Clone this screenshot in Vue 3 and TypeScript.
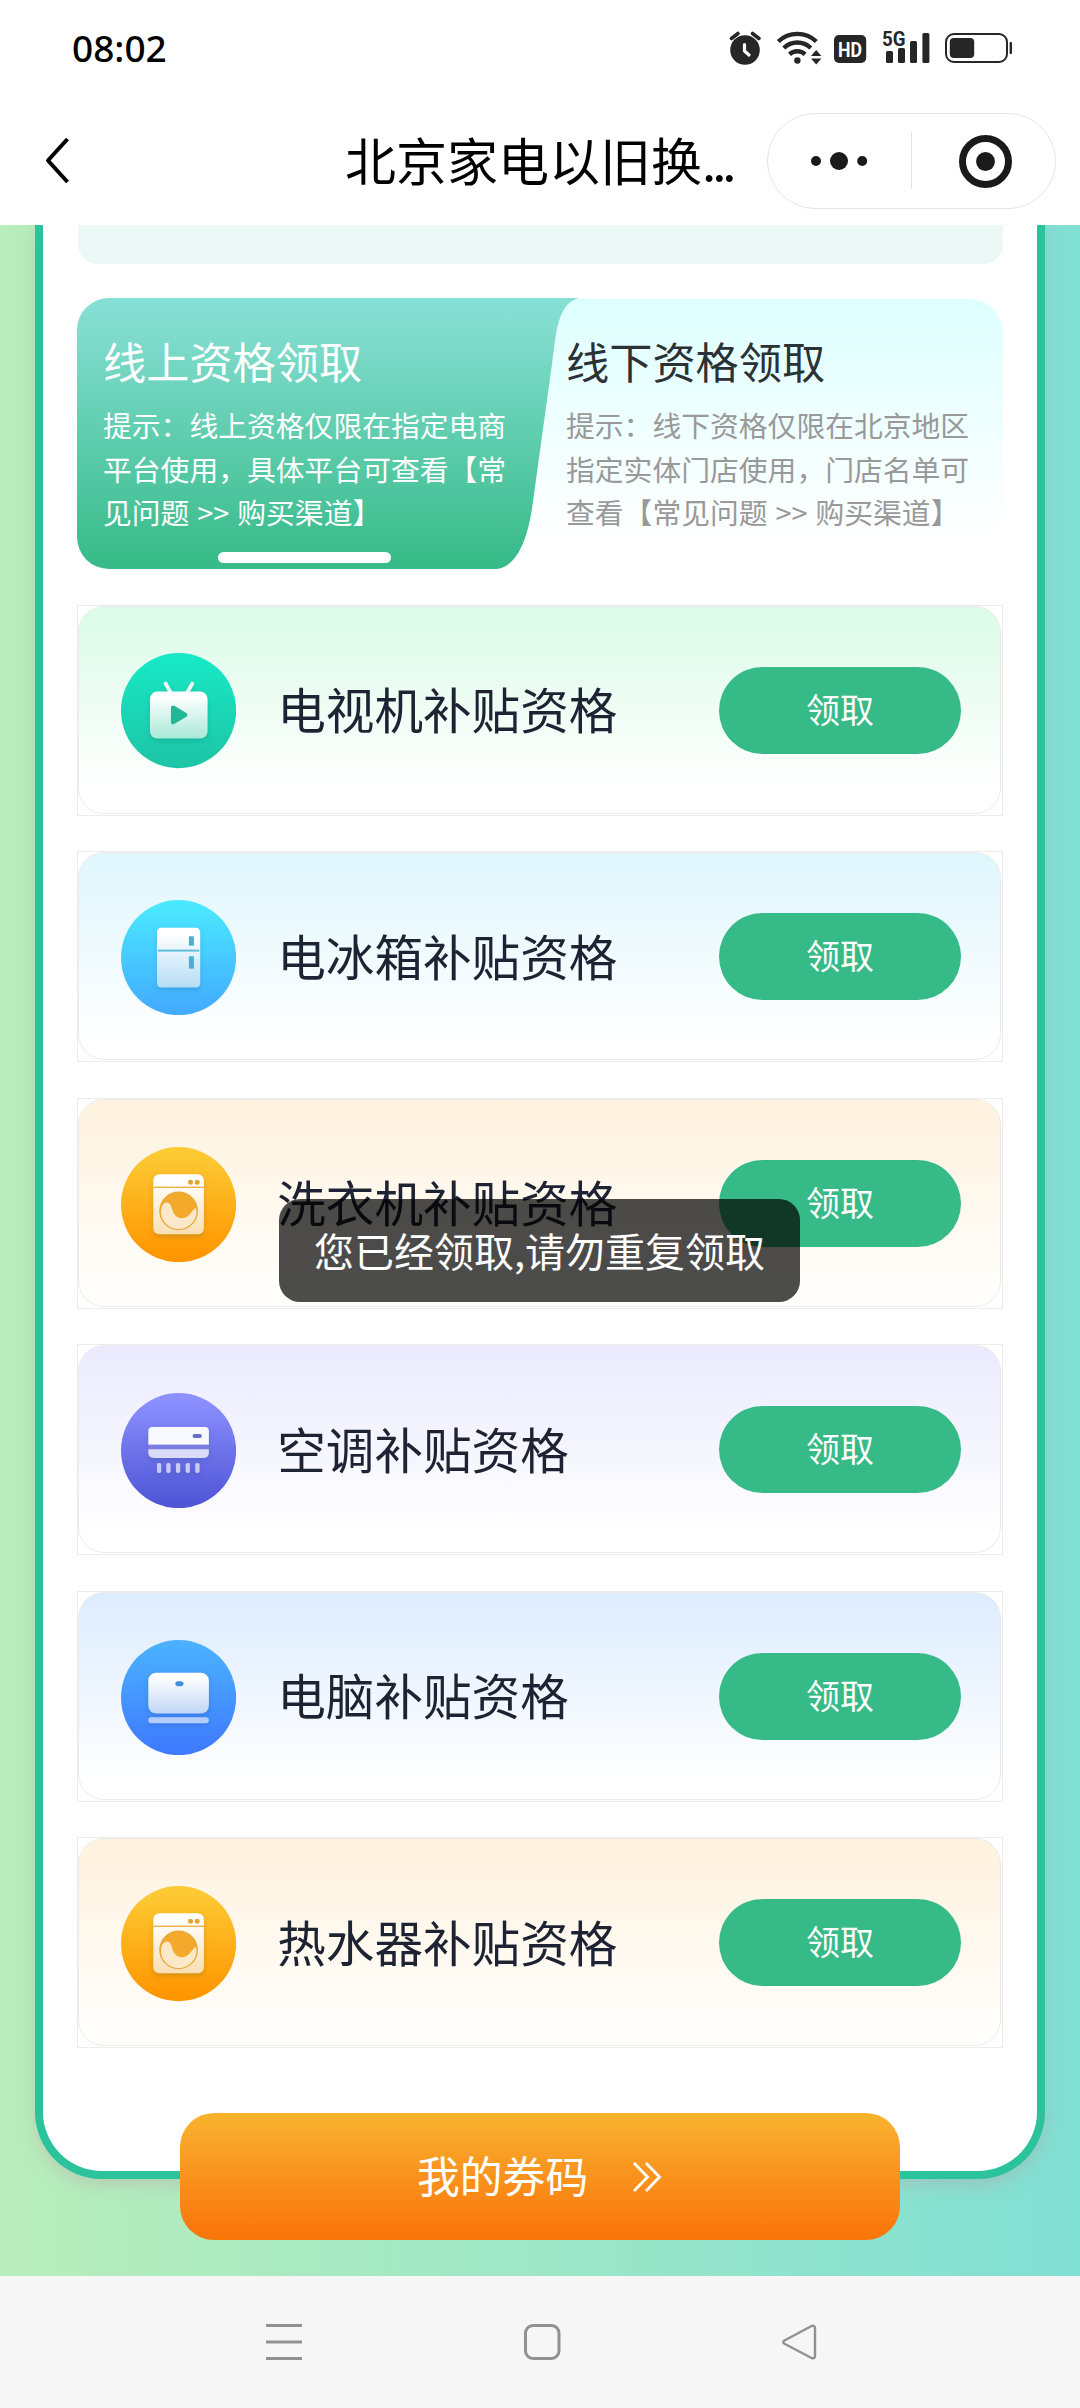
<script setup lang="ts">
type IconName = 'tv' | 'fridge' | 'washer' | 'ac' | 'laptop'

interface Item {
  id: number
  name: string
  icon: IconName
  tone: string
}

const items: Item[] = [
  { id: 1, name: '电视机补贴资格', icon: 'tv', tone: 'green' },
  { id: 2, name: '电冰箱补贴资格', icon: 'fridge', tone: 'cyan' },
  { id: 3, name: '洗衣机补贴资格', icon: 'washer', tone: 'orange' },
  { id: 4, name: '空调补贴资格', icon: 'ac', tone: 'violet' },
  { id: 5, name: '电脑补贴资格', icon: 'laptop', tone: 'blue' },
  { id: 6, name: '热水器补贴资格', icon: 'washer', tone: 'orange' },
]

const discs: Record<IconName, [string, string]> = {
  tv: ['#18e8c5', '#1cc6a6'],
  fridge: ['#4ae8ff', '#43acff'],
  washer: ['#fdca34', '#ff9600'],
  ac: ['#8d90ff', '#5056d6'],
  laptop: ['#4bb0ff', '#3f7bff'],
}

const bodies: Record<IconName, [string, string]> = {
  tv: ['#ffffff', '#a9e8d7'],
  fridge: ['#ffffff', '#b5dcf6'],
  washer: ['#ffffff', '#f8dfb4'],
  ac: ['#ffffff', '#d0d2f4'],
  laptop: ['#ffffff', '#c2d7f6'],
}

const onlineHint: string[] = [
  '提示：线上资格仅限在指定电商',
  '平台使用，具体平台可查看【常',
  '见问题 >> 购买渠道】',
]
const offlineHint: string[] = [
  '提示：线下资格仅限在北京地区',
  '指定实体门店使用，门店名单可',
  '查看【常见问题 >> 购买渠道】',
]
</script>

<template>
  <div class="phone">
    <header class="status">
      <span class="clock">08:02</span>
      <svg class="status-icons" width="290" height="44" viewBox="726 26 290 44">
        <g fill="#262626">
          <circle cx="745" cy="50" r="14.8" />
          <path d="M731.5 38.5l6.5-5M752.5 33.5l6.500 5" stroke="#262626" stroke-width="3.6" stroke-linecap="round" />
          <path d="M744.500 44.500v6.500l4.500 4" fill="none" stroke="#fff" stroke-width="3.200" stroke-linecap="round" />
          <g fill="none" stroke="#262626" stroke-width="4.4">
            <path d="M778.300 41.500a27.500 27.500 0 0 1 38 0" />
            <path d="M783.800 48a19.500 19.500 0 0 1 27 0" />
            <path d="M789.500 54.300a11.500 11.500 0 0 1 15.600 0" />
          </g>
          <circle cx="797.400" cy="60.500" r="3.200" />
          <path d="M811 56l5.200-6 5.200 6zM811 58.500l5.200 6 5.200-6z" />
          <rect x="834" y="35" width="32.200" height="28" rx="5" />
          <rect x="886" y="51" width="7" height="12" rx="1.500" />
          <rect x="898" y="48" width="7" height="15" rx="1.500" />
          <rect x="910" y="41" width="7" height="22" rx="1.500" />
          <rect x="922.400" y="33" width="7" height="30" rx="1.500" />
          <rect x="949.800" y="38" width="24.400" height="20" rx="4" />
          <rect x="1009.600" y="42" width="2.400" height="12" rx="1" />
        </g>
        <rect x="946" y="34" width="61" height="28" rx="8" fill="none" stroke="#262626" stroke-width="2" />
        <text x="850.100" y="57" class="hd" text-anchor="middle" textLength="24" lengthAdjust="spacingAndGlyphs">HD</text>
        <text x="893.800" y="46" class="fiveg" text-anchor="middle" textLength="23.500" lengthAdjust="spacingAndGlyphs">5G</text>
      </svg>
    </header>

    <nav class="titlebar">
      <svg class="back" width="30" height="52" viewBox="0 0 30 52">
        <path d="M24.500 4L5 25.500 24.500 47" fill="none" stroke="#000" stroke-width="4" stroke-linejoin="round" />
      </svg>
      <h1 class="title">北京家电以旧换<span class="dots">...</span></h1>
      <div class="capsule">
        <svg width="143" height="94" viewBox="0 0 143 94" fill="#1a1a1a">
          <circle cx="48" cy="47" r="5" />
          <circle cx="71" cy="47" r="9" />
          <circle cx="94.200" cy="47" r="5" />
        </svg>
        <i class="split"></i>
        <svg width="143" height="94" viewBox="0 0 143 94">
          <circle cx="73.500" cy="47.500" r="23" fill="none" stroke="#1a1a1a" stroke-width="7" />
          <circle cx="73.500" cy="47.500" r="9.400" fill="#1a1a1a" />
        </svg>
      </div>
    </nav>

    <main class="page">
      <section class="sheet">
        <div class="notice"></div>

        <div class="tabs">
          <svg class="tabs-bg" width="926" height="271" viewBox="0 0 926 271">
            <defs>
              <linearGradient id="tab-on" x1="0" y1="0" x2="0" y2="1">
                <stop offset="0" stop-color="#86dfd4" />
                <stop offset="0.12" stop-color="#80dccd" />
                <stop offset="1" stop-color="#36ba87" />
              </linearGradient>
              <linearGradient id="tab-off" x1="0" y1="0" x2="0" y2="1">
                <stop offset="0" stop-color="#deffff" />
                <stop offset="0.9" stop-color="#ffffff" />
              </linearGradient>
            </defs>
            <path d="M440 1H892a34 34 0 0 1 34 34V271H400z" fill="url(#tab-off)" />
            <path d="M32 0H503C490 2 483 14 479 36Q477 48 475 66L457 196C452 240 441 268 420 271H32a32 32 0 0 1-32-32V32A32 32 0 0 1 32 0z" fill="url(#tab-on)" />
          </svg>
          <div class="tab online">
            <h2>线上资格领取</h2>
            <p v-for="line in onlineHint" :key="line">{{ line }}</p>
            <i class="indicator"></i>
          </div>
          <div class="tab offline">
            <h2>线下资格领取</h2>
            <p v-for="line in offlineHint" :key="line">{{ line }}</p>
          </div>
        </div>

        <ul class="list">
          <li v-for="item in items" :key="item.id" class="item">
            <div class="item-inner" :class="item.tone">
              <svg class="icon" viewBox="0 0 346 346">
                <defs>
                  <linearGradient :id="`disc-${item.id}`" x1="0" y1="0" x2="0" y2="1">
                    <stop offset="0.05" :stop-color="discs[item.icon][0]" />
                    <stop offset="0.95" :stop-color="discs[item.icon][1]" />
                  </linearGradient>
                  <linearGradient :id="`body-${item.id}`" x1="0" y1="0" x2="0" y2="1">
                    <stop offset="0.1" :stop-color="bodies[item.icon][0]" />
                    <stop offset="1" :stop-color="bodies[item.icon][1]" />
                  </linearGradient>
                </defs>
                <circle cx="173" cy="173" r="173" :fill="`url(#disc-${item.id})`" />

                <g v-if="item.icon === 'tv'" class="raised">
                  <path d="M134 92l16 28M214 92l-16 28" stroke="#e6fbf6" stroke-width="12" stroke-linecap="round" />
                  <rect x="87" y="116" width="173" height="141" rx="22" :fill="`url(#body-${item.id})`" />
                  <path d="M154 165q0-5 5-2l34 20q5 3 0 6l-34 20q-5 3-5-2z" fill="#22b795" stroke="#22b795" stroke-width="8" stroke-linejoin="round" />
                </g>

                <g v-else-if="item.icon === 'fridge'" class="raised">
                  <rect x="108" y="83" width="130" height="180" rx="13" :fill="`url(#body-${item.id})`" />
                  <rect x="111" y="149" width="124" height="6" fill="#5fbdd8" />
                  <rect x="204" y="109" width="15" height="28" fill="#46b2d2" />
                  <rect x="204" y="169" width="15" height="37" fill="#46b2d2" />
                </g>

                <g v-else-if="item.icon === 'washer'" class="raised">
                  <rect x="97" y="82" width="152" height="180" rx="18" :fill="`url(#body-${item.id})`" />
                  <rect x="97" y="119" width="152" height="4" fill="#edb03c" />
                  <circle cx="209" cy="106" r="7.500" fill="#e3a52f" />
                  <circle cx="229" cy="106" r="7.500" fill="#e3a52f" />
                  <circle cx="173" cy="192" r="57" fill="#f2a92c" />
                  <path d="M124 176C132 164 144 162 151 178C156 196 162 214 184 214C206 214 212 190 226 182A54 54 0 1 1 124 176z" fill="#fbe8c8" />
                  <circle cx="173" cy="192" r="56" fill="none" stroke="#e9a93a" stroke-width="4" />
                </g>

                <g v-else-if="item.icon === 'ac'" class="raised">
                  <path d="M82 156v-42q0-12 12-12h158q12 0 12 12v42z" fill="#f8f8ff" />
                  <rect x="82" y="155" width="182" height="15" fill="#7b7ee0" />
                  <path d="M82 169h182v10q0 16-16 16H98q-16 0-16-16z" fill="#dadbf7" />
                  <rect x="215" y="123" width="28" height="12" rx="6" fill="#6a6dc4" />
                  <rect v-for="x in [108, 136, 165, 194, 223]" :key="x" :x="x" y="210" width="13" height="30" rx="5" fill="#c8cbf6" />
                </g>

                <g v-else class="raised">
                  <rect x="82" y="98" width="182" height="123" rx="24" :fill="`url(#body-${item.id})`" />
                  <rect x="163" y="124" width="25" height="15" rx="7.500" fill="#4590dd" />
                  <rect x="82" y="232" width="182" height="18" rx="9" fill="#b3cdfb" />
                </g>
              </svg>
              <span class="name">{{ item.name }}</span>
              <button class="claim" type="button">领取</button>
            </div>
          </li>
        </ul>
      </section>

      <button class="codes" type="button">
        <span>我的券码</span>
        <svg width="30" height="32" viewBox="0 0 30 32">
          <path d="M2 2l13.500 14L2 30M14 2l13.500 14L14 30" fill="none" stroke="#fff" stroke-width="2.800" />
        </svg>
      </button>
    </main>

    <footer class="keys">
      <svg width="40" height="40" viewBox="0 0 40 40">
        <path d="M2 3.500h36M2 20h36M2 36.500h36" stroke="#919191" stroke-width="3" />
      </svg>
      <svg width="40" height="40" viewBox="0 0 40 40">
        <rect x="3.500" y="3.500" width="33.500" height="33" rx="7.500" fill="none" stroke="#919191" stroke-width="3" />
      </svg>
      <svg width="40" height="40" viewBox="0 0 40 40">
        <path d="M4.500 18.500L31.500 4Q35 3 35 6.500V33.500Q35 37 31.500 36L4.500 21.800Q2 20.200 4.500 18.500z" fill="none" stroke="#919191" stroke-width="2.400" stroke-linejoin="round" />
      </svg>
    </footer>

    <div class="toast">您已经领取,请勿重复领取</div>
  </div>
</template>

<style>
body {
  margin: 0;
}
</style>

<style scoped>
.phone {
  position: relative;
  display: flex;
  flex-direction: column;
  width: 1080px;
  height: 2408px;
  overflow: hidden;
  background: #fff;
  font-family: 'Noto Sans CJK SC', 'Noto Sans', sans-serif;
}
h1,
h2,
p,
ul {
  margin: 0;
  padding: 0;
  font-weight: 400;
  list-style: none;
}
button {
  border: 0;
  padding: 0;
  font-family: inherit;
  color: #fff;
}
svg {
  display: block;
  flex: none;
}

.status {
  display: flex;
  justify-content: space-between;
  align-items: center;
  box-sizing: border-box;
  height: 96px;
  padding: 0 64px 0 72px;
}
.clock {
  font-family: 'Noto Sans', sans-serif;
  font-size: 37px;
  font-weight: 500;
  line-height: 44px;
  color: #000;
}
.hd {
  font: 700 21px Roboto, sans-serif;
  fill: #fff;
}
.fiveg {
  font: 700 21px Roboto, sans-serif;
  fill: #262626;
}

.titlebar {
  display: flex;
  align-items: center;
  box-sizing: border-box;
  height: 129px;
  padding: 0 24px 0 43px;
}
.title {
  margin-left: 272px;
  width: 422px;
  padding-bottom: 4px;
  font-size: 51px;
  line-height: 70px;
  white-space: nowrap;
  color: #000;
}
.dots {
  letter-spacing: -4px;
}
.capsule {
  display: flex;
  align-items: center;
  width: 287px;
  height: 94px;
  border: 1px solid #e4e4e4;
  border-radius: 48px;
}
.split {
  width: 1px;
  height: 57px;
  background: #e2e2e2;
}

.page {
  display: flex;
  flex-direction: column;
  align-items: center;
  height: 2051px;
  overflow: hidden;
  background: linear-gradient(90deg, #b9eebb 0%, #80dfd3 100%);
}
.sheet {
  box-sizing: border-box;
  width: 1010px;
  height: 1954px;
  flex: none;
  padding: 0 34px;
  border: solid #2bc39b;
  border-width: 0 8px 8px;
  border-radius: 0 0 67px 67px;
  background: #fff;
  box-shadow: 0 6px 18px rgba(190, 150, 160, 0.35);
}
.notice {
  height: 39px;
  margin: 0 0.500px;
  border-radius: 0 0 20px 20px;
  background: #ecf8f5;
}

.tabs {
  position: relative;
  display: flex;
  height: 271px;
  margin-top: 34px;
}
.tabs-bg {
  position: absolute;
  inset: 0;
}
.tab {
  position: relative;
  box-sizing: border-box;
  padding: 30px 0 0 26px;
  white-space: nowrap;
}
.tab h2 {
  margin-bottom: 11px;
  font-size: 43.200px;
  line-height: 64px;
}
.tab p {
  font-size: 28.800px;
  line-height: 43.500px;
  word-spacing: 1.500px;
}
.online {
  width: 463px;
  color: #fff;
}
.offline h2 {
  color: #2c3135;
}
.offline p {
  color: #999;
}
.indicator {
  position: absolute;
  left: 141px;
  bottom: 6px;
  width: 173px;
  height: 11px;
  border-radius: 6px;
  background: #fff;
}

.list {
  display: flex;
  flex-direction: column;
  gap: 35.600px;
  margin-top: 35.500px;
}
.item {
  box-sizing: border-box;
  height: 211px;
  border: 1px solid #ececec;
}
.item-inner {
  display: flex;
  align-items: center;
  box-sizing: border-box;
  height: 208px;
  margin: 0 1px 1px 0;
  padding: 3px 39px 0 42px;
  border: 1px solid #ececec;
  border-radius: 26px;
}
.green {
  background: linear-gradient(#dbfbe8, #fff 88%);
}
.cyan {
  background: linear-gradient(#dff6fd, #fff 92%);
}
.orange {
  background: linear-gradient(#fff2df, #fffefb 92%);
}
.violet {
  background: linear-gradient(#ebeafd, #fff 92%);
}
.blue {
  background: linear-gradient(#ddecfe, #fff 92%);
}
.icon {
  width: 115.200px;
  height: 115.200px;
}
.raised {
  filter: drop-shadow(0 8px 8px rgba(0, 60, 90, 0.16));
}
.name {
  flex: 1;
  margin-left: 41px;
  padding-bottom: 6px;
  font-size: 48.600px;
  line-height: 70px;
  color: #1d2333;
}
.claim {
  box-sizing: border-box;
  width: 242px;
  height: 87px;
  margin-bottom: 2px;
  padding-bottom: 3px;
  border-radius: 44px;
  background: #36ba87;
  font-size: 34px;
  line-height: 84px;
}

.codes {
  position: relative;
  display: flex;
  align-items: center;
  box-sizing: border-box;
  flex: none;
  width: 720px;
  height: 127px;
  margin-top: -66px;
  padding: 0 0 6px 237px;
  border-radius: 34px;
  background: linear-gradient(#f8b32a 0%, #f9a92b 15%, #fa7a0e 88%, #f8760a 100%);
  font-size: 42.800px;
  line-height: 64px;
}
.codes svg {
  margin: 6px 0 0 44px;
}

.keys {
  display: flex;
  justify-content: center;
  gap: 218px;
  box-sizing: border-box;
  height: 132px;
  padding: 46px 0 0 4px;
  background: #f6f6f6;
}

.toast {
  position: absolute;
  left: 279px;
  top: 1199px;
  width: 521px;
  height: 103px;
  border-radius: 21px;
  background: rgba(0, 0, 0, 0.7);
  font-size: 40px;
  line-height: 102px;
  text-align: center;
  white-space: nowrap;
  color: #fff;
}
</style>
